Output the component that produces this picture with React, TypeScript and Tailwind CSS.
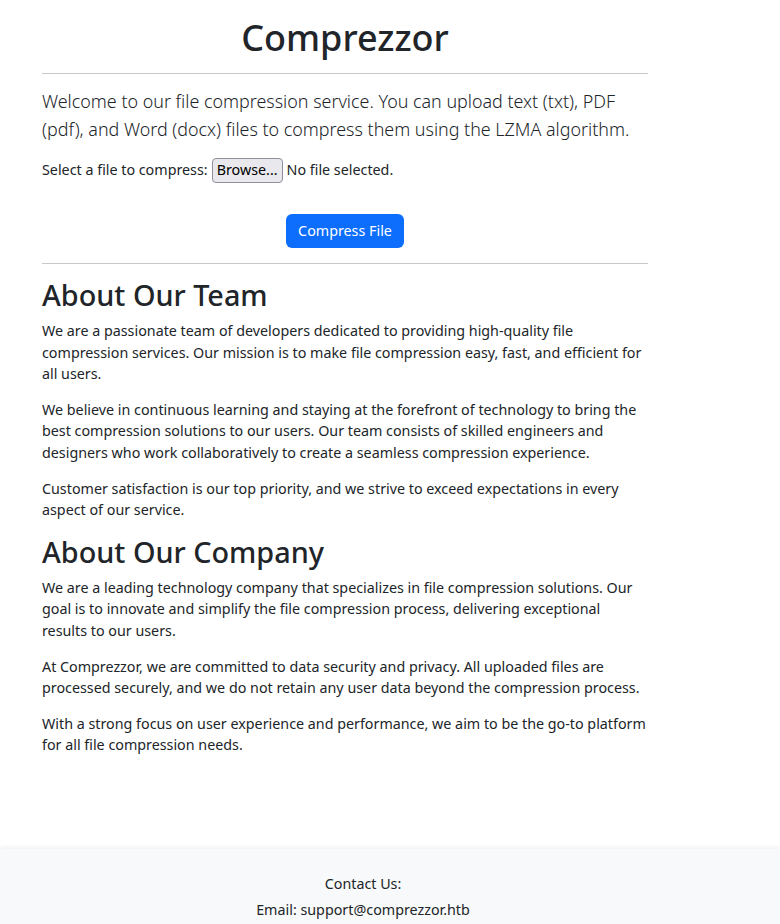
export default function App() {
  const team = [
    "We are a passionate team of developers dedicated to providing high-quality file compression services. Our mission is to make file compression easy, fast, and efficient for all users.",
    "We believe in continuous learning and staying at the forefront of technology to bring the best compression solutions to our users. Our team consists of skilled engineers and designers who work collaboratively to create a seamless compression experience.",
    "Customer satisfaction is our top priority, and we strive to exceed expectations in every aspect of our service.",
  ]
  const company = [
    "We are a leading technology company that specializes in file compression solutions. Our goal is to innovate and simplify the file compression process, delivering exceptional results to our users.",
    "At Comprezzor, we are committed to data security and privacy. All uploaded files are processed securely, and we do not retain any user data beyond the compression process.",
    "With a strong focus on user experience and performance, we aim to be the go-to platform for all file compression needs.",
  ]

  return (
    <div className="min-h-[924px] bg-white text-[#212529] font-['Noto_Sans',sans-serif] text-[14.3px] leading-[21.5px] flex flex-col">
      <main className="ml-[42px] w-[606px]">
        {/* Header */}
        <h1 className="text-center text-[36px] leading-[46px] font-medium pt-[15px]">Comprezzor</h1>
        <hr className="mt-[12px] border-t border-[#c8c9ca]" />

        <p className="mt-[14px] text-[17.9px] leading-[27.5px] font-light">
          Welcome to our file compression service. You can upload text (txt), PDF (pdf), and Word (docx) files to
          compress them using the LZMA algorithm.
        </p>

        {/* Upload form */}
        <form className="mt-[14px]" onSubmit={(e) => e.preventDefault()}>
          <div className="flex items-center h-[26px]">
            <span>Select a file to compress:</span>
            <span className="ml-[4px] h-[25px] px-[4px] flex items-center border border-[#8f8f9d] rounded-[4px] bg-[#e9e9ed] text-black">
              Browse...
            </span>
            <span className="ml-[4px]">No file selected.</span>
          </div>
          <div className="flex justify-center mt-[31px]">
            <button className="h-[34px] px-[12px] rounded-[6px] bg-[#0d6efd] text-white">Compress File</button>
          </div>
        </form>

        <hr className="mt-[15px] border-t border-[#c8c9ca]" />

        <section className="mt-[13px]">
          <h2 className="text-[28.8px] leading-[35px] font-medium mb-[8px]">About Our Team</h2>
          {team.map((t) => (
            <p key={t} className="mb-[14.3px]">
              {t}
            </p>
          ))}
        </section>

        <section>
          <h2 className="text-[28.8px] leading-[34px] font-medium mb-[8px]">About Our Company</h2>
          {company.map((t) => (
            <p key={t} className="mb-[14.3px]">
              {t}
            </p>
          ))}
        </section>
      </main>

      <footer className="mt-auto h-[75px] bg-[#f8f9fa] shadow-[0_-2px_4px_rgba(0,0,0,0.06)] pt-[24px] pr-[54px] leading-[22px]">
        <p className="text-center mb-[4px]">Contact Us:</p>
        <p className="text-center">Email: support@comprezzor.htb</p>
      </footer>
    </div>
  )
}
